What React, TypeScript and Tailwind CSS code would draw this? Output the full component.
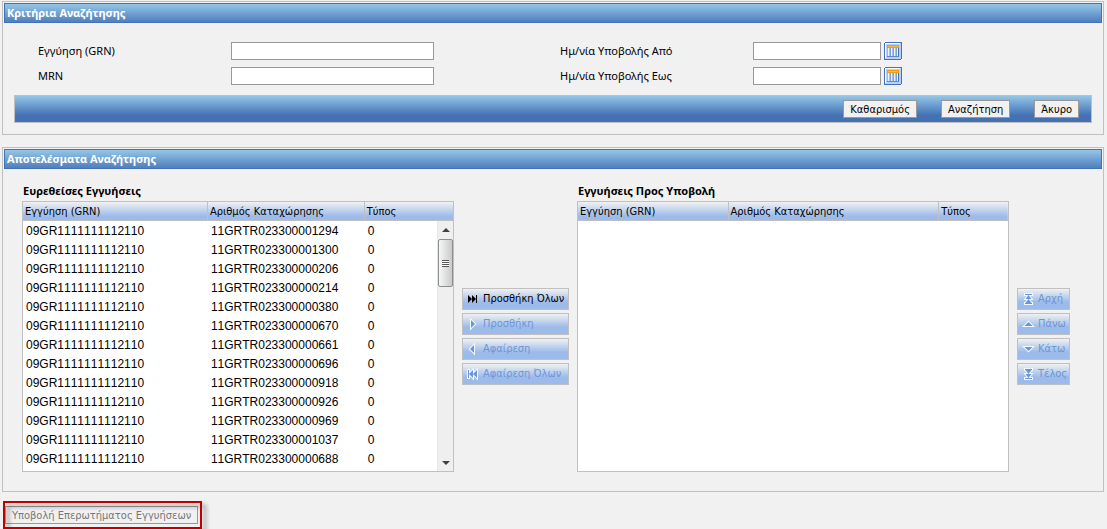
import { ReactNode } from 'react';

interface Guarantee {
  grn: string;
  registration: string;
  type: string;
}

interface Column {
  label: string;
  width: string;
}

const registrations = [
  '11GRTR023300001294',
  '11GRTR023300001300',
  '11GRTR023300000206',
  '11GRTR023300000214',
  '11GRTR023300000380',
  '11GRTR023300000670',
  '11GRTR023300000661',
  '11GRTR023300000696',
  '11GRTR023300000918',
  '11GRTR023300000926',
  '11GRTR023300000969',
  '11GRTR023300001037',
  '11GRTR023300000688',
];

const found: Guarantee[] = registrations.map((registration) => ({
  grn: '09GR1111111112110',
  registration,
  type: '0',
}));

const foundColumns: Column[] = [
  { label: 'Εγγύηση (GRN)', width: 'w-[43%]' },
  { label: 'Αριθμός Καταχώρησης', width: 'w-[36.5%]' },
  { label: 'Τύπος', width: 'w-[20.5%]' },
];

const submitColumns: Column[] = [
  { label: 'Εγγύηση (GRN)', width: 'w-[35%]' },
  { label: 'Αριθμός Καταχώρησης', width: 'w-[49%]' },
  { label: 'Τύπος', width: 'w-[16%]' },
];

function Panel({ title, className = '', children }: { title: string; className?: string; children: ReactNode }) {
  return (
    <section className={`border border-[#c0c0c0] p-px ${className}`}>
      <h2 className="h-5 border border-[#4472b5] bg-linear-to-b from-[#95c6e7] to-[#507fbd] px-0.5 font-['Noto_Sans','Open_Sans',sans-serif] text-[11px] leading-[18px] font-bold text-white">
        {title}
      </h2>
      {children}
    </section>
  );
}

function CalendarIcon() {
  return (
    <svg className="size-[18px]" viewBox="0 0 18 18" shapeRendering="crispEdges">
      <rect x="0" y="0" width="18" height="18" rx="2" fill="#4472b8" />
      <rect x="1" y="1" width="16" height="16" fill="#b9d0f2" />
      <rect x="1" y="1" width="15" height="1" fill="#ffffff" />
      <rect x="1" y="1" width="1" height="15" fill="#ffffff" />
      <rect x="3" y="3" width="12" height="3" fill="#ef9d14" />
      <rect x="4" y="4" width="10" height="1" fill="#f9b93f" />
      <rect x="3" y="6" width="12" height="9" fill="#eef4fd" />
      <rect x="3" y="6" width="1" height="9" fill="#9db9e2" />
      <path d="M5 6h1v9h-1zM8 6h1v9h-1zM11 6h1v9h-1z" fill="#a9c1e6" />
      <path d="M6 6h1v9h-1zM9 6h1v9h-1zM12 6h1v9h-1z" fill="#7c9fd6" />
      <rect x="14" y="6" width="1" height="9" fill="#4472b8" />
      <rect x="3" y="14" width="12" height="1" fill="#5f88c8" />
    </svg>
  );
}

function Field({ id, label, date }: { id: string; label: string; date?: boolean }) {
  return (
    <div className="flex items-center">
      <label htmlFor={id} className="w-[193px] shrink-0 font-['Noto_Sans','Open_Sans',sans-serif]">
        {label}
      </label>
      <input
        id={id}
        type="text"
        className={`h-[18px] border border-[#999999] bg-white px-1 outline-none ${date ? 'w-32' : 'w-[203px]'}`}
      />
      {date && (
        <button type="button" aria-label={`Ημερολόγιο: ${label}`} className="ml-[3px]">
          <CalendarIcon />
        </button>
      )}
    </div>
  );
}

function ToolButton({ children }: { children: ReactNode }) {
  return (
    <button type="button" className="h-[18px] border border-[#999999] bg-[#f1f1f1] px-1.5 pt-px leading-[15px]">
      {children}
    </button>
  );
}

// Small arrow glyphs, 12x12. Disabled ones get a white edge.
const glyphs = {
  last: 'M1 2l4 4-4 4zM5 2l4 4-4 4zM9 2h1v8h-1z',
  next: 'M4 2l4 4-4 4z',
  previous: 'M7 2l-4 4 4 4z',
  first: 'M1 2h1v8h-1zM6 2l-4 4 4 4zM10 2l-4 4 4 4z',
  top: 'M3 1h7v1h-7zM6.500 2l3 4h-6zM6.500 6l3 4h-6zM3 10h7v1h-7z',
  up: 'M6.500 4l4 4h-8z',
  down: 'M2.500 4h8l-4 4z',
  bottom: 'M3 1h7v1h-7zM3.500 2h6l-3 4zM3.500 6h6l-3 4zM3 10h7v1h-7z',
};

function MoveButton({ icon, label, disabled }: { icon: keyof typeof glyphs; label: string; disabled?: boolean }) {
  return (
    <button
      type="button"
      disabled={disabled}
      className={`flex h-[22px] items-center gap-1 border border-[#c0c0c0] bg-linear-to-b from-[#f1f1f1] to-[#9dbbea] to-65% pl-1 text-left leading-4 whitespace-nowrap ${
        disabled ? 'text-[#6b96d6]' : 'text-black'
      }`}
    >
      <svg className="size-3 shrink-0 overflow-visible" viewBox="0 0 12 12">
        <path
          d={glyphs[icon]}
          fill="currentColor"
          stroke={disabled ? '#f4f8ff' : 'none'}
          strokeWidth="2"
          paintOrder="stroke"
        />
      </svg>
      {label}
    </button>
  );
}

function ScrollBar() {
  return (
    <div
      aria-hidden="true"
      className="absolute top-[19px] right-0 bottom-0 flex w-4 flex-col items-center border-l border-[#e6e6e6] bg-[#efefef]"
    >
      <svg className="h-[18px] w-4 shrink-0" viewBox="0 0 16 18">
        <path d="M8 7l4 4h-8z" fill="#404040" />
      </svg>
      <div className="flex h-12 w-full flex-col items-center justify-center rounded-xs border border-[#8e8e8e] bg-linear-to-r from-[#f6f6f6] to-[#c9cacc]">
        <div className="h-px w-[7px] bg-[#555555]" />
        <div className="h-px w-[7px] bg-white" />
        <div className="h-px w-[7px] bg-[#555555]" />
        <div className="h-px w-[7px] bg-white" />
        <div className="h-px w-[7px] bg-[#555555]" />
        <div className="h-px w-[7px] bg-white" />
        <div className="h-px w-[7px] bg-[#555555]" />
      </div>
      <svg className="mt-auto h-[18px] w-4 shrink-0" viewBox="0 0 16 18">
        <path d="M4 8h8l-4 4z" fill="#404040" />
      </svg>
    </div>
  );
}

function GuaranteeList({ title, columns, rows, scroll }: { title: string; columns: Column[]; rows: Guarantee[]; scroll?: boolean }) {
  return (
    <div className="min-w-0 flex-1">
      <h3 className="pt-0.5 pb-0.5 pl-px font-['Noto_Sans','Open_Sans',sans-serif] text-[11px] leading-4 font-bold">{title}</h3>
      <div className="relative h-[271px] border border-[#c0c0c0] bg-white">
        <table className="w-full table-fixed border-separate border-spacing-0">
          <thead>
            <tr className="bg-linear-to-b from-[#f1f1f1] to-[#9dbbea] to-75%">
              {columns.map((c) => (
                <th
                  key={c.label}
                  className={`h-[19px] border-r border-b border-[#c0c0c0] p-0 pt-px pl-0.5 text-left leading-[17px] font-normal last:border-r-0 ${c.width}`}
                >
                  {c.label}
                </th>
              ))}
            </tr>
          </thead>
          <tbody className="font-['Liberation_Sans',Arial,sans-serif] text-[12px] leading-[17px] [font-kerning:none]">
            {rows.map((r) => (
              <tr key={r.registration}>
                <td className="p-0 pt-0.5 pl-[3px]">{r.grn}</td>
                <td className="p-0 pt-0.5 pl-[3px]">{r.registration}</td>
                <td className="p-0 pt-0.5 pl-[3px]">{r.type}</td>
              </tr>
            ))}
          </tbody>
        </table>
        {scroll && <ScrollBar />}
      </div>
    </div>
  );
}

export default function App() {
  return (
    <main className="min-h-screen bg-[#f1f1f1] pt-px pr-[3px] pl-0.5 font-['DejaVu_Sans_Condensed','Noto_Sans',sans-serif] text-[11px] leading-4 text-black">
      <Panel title="Κριτήρια Αναζήτησης">
        <form className="pb-2.5" onSubmit={(e) => e.preventDefault()}>
          <div className="grid grid-cols-2 gap-y-[7px] pt-[19px] pr-5 pb-2.5 pl-[34px]">
            <Field id="grn" label="Εγγύηση (GRN)" />
            <Field id="from" label="Ημ/νία Υποβολής Από" date />
            <Field id="mrn" label="MRN" />
            <Field id="to" label="Ημ/νία Υποβολής Εως" date />
          </div>
          <div className="mx-2.5 flex justify-end gap-6 border border-[#c0c0c0] bg-linear-to-b from-[#95c6e7] to-[#4471b3] to-75% py-1 pr-3">
            <ToolButton>Καθαρισμός</ToolButton>
            <ToolButton>Αναζήτηση</ToolButton>
            <ToolButton>Άκυρο</ToolButton>
          </div>
        </form>
      </Panel>

      <Panel title="Αποτελέσματα Αναζήτησης" className="mt-3">
        <div className="flex gap-2 pt-3 pr-8 pb-[18px] pl-[18px]">
          <GuaranteeList title="Ευρεθείσες Εγγυήσεις" columns={foundColumns} rows={found} scroll />
          <div className="flex w-[107px] shrink-0 flex-col justify-center gap-[3px] pt-5">
            <MoveButton icon="last" label="Προσθήκη Όλων" />
            <MoveButton icon="next" label="Προσθήκη" disabled />
            <MoveButton icon="previous" label="Αφαίρεση" disabled />
            <MoveButton icon="first" label="Αφαίρεση Όλων" disabled />
          </div>
          <GuaranteeList title="Εγγυήσεις Προς Υποβολή" columns={submitColumns} rows={[]} />
          <div className="flex w-[53px] shrink-0 flex-col justify-center gap-[3px] pt-5">
            <MoveButton icon="top" label="Αρχή" disabled />
            <MoveButton icon="up" label="Πάνω" disabled />
            <MoveButton icon="down" label="Κάτω" disabled />
            <MoveButton icon="bottom" label="Τέλος" disabled />
          </div>
        </div>
      </Panel>

      <div className="relative mt-[9px] ml-px inline-block py-[5px] pr-1 pl-0.5 align-top">
        <button type="button" disabled className="block h-[18px] border border-[#999999] bg-[#f1f1f1] px-1.5 pt-px leading-[15px] text-[#777777]">
          Υποβολή Επερωτήματος Εγγυήσεων
        </button>
        <span className="pointer-events-none absolute inset-0 border-2 border-[#c00000] drop-shadow-[4px_4px_2px_rgba(0,0,0,0.4)]" />
      </div>
    </main>
  );
}
